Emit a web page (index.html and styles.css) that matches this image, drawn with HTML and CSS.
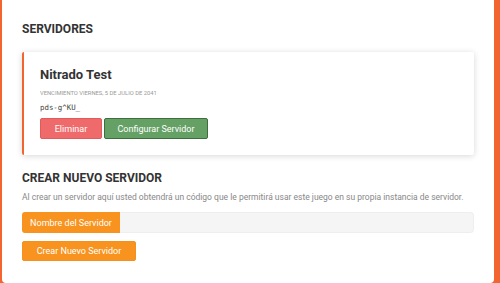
FILE: index.html
```html
<!DOCTYPE html>
<html lang="es">
<head>
  <meta charset="UTF-8" />
  <meta name="viewport" content="width=device-width, initial-scale=1.0"/>
  <title>Servidores</title>
  <link rel="stylesheet" href="styles.css">
</head>
<body>
  <div class="panel">
    <h2 class="section-title">SERVIDORES</h2>

    <div class="server-card">
      <h3 class="server-name">Nitrado Test</h3>
      <div class="server-expiry">VENCIMIENTO VIERNES, 5 DE JULIO DE 2041</div>
      <div class="server-code">pds-g^KU_</div>
      <div class="server-actions">
        <button class="btn btn-danger">Eliminar</button>
        <button class="btn btn-success">Configurar Servidor</button>
      </div>
    </div>

    <h2 class="section-title create-title">CREAR NUEVO SERVIDOR</h2>
    <p class="create-text">Al crear un servidor aquí usted obtendrá un código que le permitirá usar este juego en su propia instancia de servidor.</p>

    <form class="create-form">
      <div class="input-group">
        <span class="input-addon">Nombre del Servidor</span>
        <input type="text" class="input-field" name="serverName">
      </div>
      <button type="submit" class="btn btn-warning">Crear Nuevo Servidor</button>
    </form>
  </div>
</body>
</html>
```

FILE: styles.css
```css
body {
  font-family: Roboto, "Liberation Sans", Arial, sans-serif;
  background-color: #f26530;
  margin: 0;
  height: 283px;
  overflow: hidden;
}

.panel {
  background-color: #fff;
  margin: -6px 6px 0 2px;
  height: 289px;
  border-radius: 4px;
  padding: 28px 20px 0 20px;
  box-sizing: border-box;
}

.section-title {
  margin: 0;
  font-size: 12px;
  font-weight: bold;
  color: #333;
  line-height: 14px;
}

.server-card {
  margin-top: 16px;
  border-left: 2px solid #f26530;
  border-radius: 2px;
  box-shadow: 0 1px 6px rgba(0, 0, 0, 0.16);
  padding: 14px 16px 16px 16px;
}

.server-name {
  margin: 0;
  font-size: 13px;
  font-weight: bold;
  color: #333;
  line-height: 18px;
}

.server-expiry {
  margin-top: 5px;
  font-size: 5.8px;
  color: #999;
  line-height: 8px;
}

.server-code {
  margin-top: 6px;
  font-family: "DejaVu Sans Mono", monospace;
  font-size: 7.4px;
  color: #444;
  line-height: 10px;
}

.server-actions {
  display: flex;
  gap: 2px;
  margin-top: 5px;
}

.btn {
  font-family: Roboto, "Liberation Sans", Arial, sans-serif;
  font-size: 9px;
  color: #fff;
  border: 1px solid transparent;
  border-radius: 2px;
  height: 21px;
  padding: 0;
  cursor: pointer;
}

.btn-danger {
  background-color: #ef6b6b;
  border-color: #e25a5a;
  width: 62px;
}

.btn-success {
  background-color: #65a064;
  border-color: #3e6e3d;
  width: 104px;
}

.create-title {
  margin-top: 16px;
}

.create-text {
  margin: 7px 0 0 0;
  font-size: 8.5px;
  color: #888;
  line-height: 11px;
}

.create-form {
  margin-top: 9px;
}

.input-group {
  display: flex;
  height: 21px;
}

.input-addon {
  display: flex;
  align-items: center;
  justify-content: center;
  width: 98px;
  background-color: #f7931e;
  color: #fff;
  font-size: 9px;
  border-radius: 3px 0 0 3px;
}

.input-field {
  flex: 1;
  border: 1px solid #eee;
  border-left: none;
  background-color: #f5f5f5;
  border-radius: 0 4px 4px 0;
  padding: 0 8px;
}

.btn-warning {
  margin-top: 8px;
  background-color: #f7931e;
  border-color: #f39020;
  width: 114px;
  height: 20px;
}
```
